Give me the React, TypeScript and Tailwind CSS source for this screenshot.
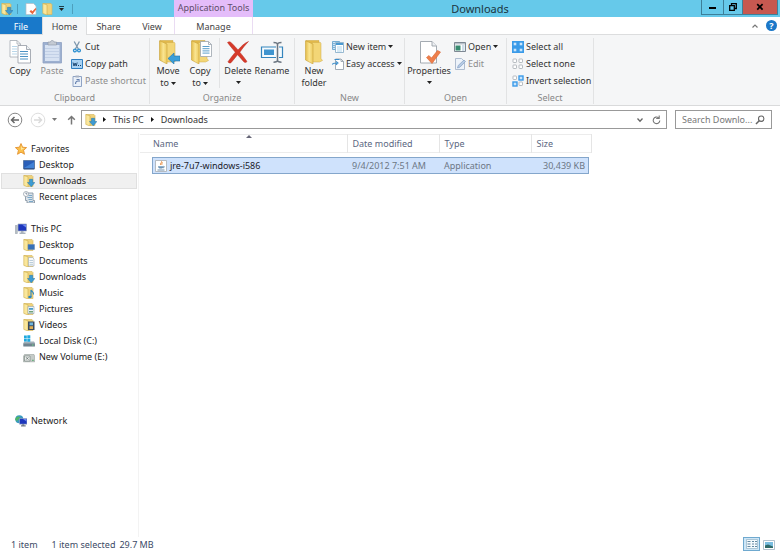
import type { ReactNode } from "react";

function FolderBig({ children }: { children?: ReactNode }) {
  return (
    <svg viewBox="0 0 24 24" className="w-6 h-6 shrink-0" aria-hidden="true">
      <defs>
        <linearGradient id="folderFace" x1="0" y1="0" x2="1" y2="0">
          <stop offset="0" stopColor="#e3bb48" />
          <stop offset="0.5" stopColor="#fae592" />
          <stop offset="1" stopColor="#ecca5e" />
        </linearGradient>
      </defs>
      <path d="M4 0.5h13v20H8z" fill="#e2b94a" stroke="#cda63f" strokeWidth="0.5" />
      <path d="M10 2.5h8.5l0.5 1v15l1.5 2-3 1.5H10z" fill="#f3d676" stroke="#cfab48" strokeWidth="0.5" />
      <path d="M3.5 0.8 11 4v20l-7.5-4z" fill="url(#folderFace)" stroke="#c9a23a" strokeWidth="0.6" />
      {children}
    </svg>
  );
}

function FolderSmall({ children }: { children?: ReactNode }) {
  return (
    <svg viewBox="0 0 12 12" className="w-3 h-3 shrink-0" aria-hidden="true">
      <path d="M1 0.5h8l1 1V11.5H5z" fill="#efd27a" stroke="#d3b45a" strokeWidth="0.6" />
      <path d="M0.8 0.5 5 1.8V12L0.8 10.4z" fill="#fae79c" stroke="#cfac4a" strokeWidth="0.6" />
      {children}
    </svg>
  );
}

const downArrow = (
  <path d="M6.5 4.3h3.2v3.2h2.2L8.2 11.8 4.5 7.5h2z" fill="#3d9bd3" stroke="#2377ad" strokeWidth="0.5" />
);

function Page({ x, y }: { x: number; y: number }) {
  return (
    <g transform={`translate(${x} ${y})`}>
      <path d="M0.5 0.5h8l3 3v12h-11z" fill="#fff" stroke="#9ca4ad" strokeWidth="0.8" />
      <path d="M8.5 0.5v3h3" fill="none" stroke="#9ca4ad" strokeWidth="0.8" />
      <path d="M2.5 5.5h7M2.5 7.7h7M2.5 9.9h7M2.5 12.1h7" stroke="#5b9fcb" strokeWidth="1" />
    </g>
  );
}

function CopyIcon() {
  return (
    <svg viewBox="0 0 24 24" className="w-6 h-6" aria-hidden="true">
      <path d="M2 0.5h7l3.5 3.5v13H2z" fill="#fff" stroke="#a5abb2" strokeWidth="0.8" />
      <path d="M9 0.5V4h3.5" fill="none" stroke="#a5abb2" strokeWidth="0.8" />
      <path d="M4 6.5h5M4 9h5M4 11.5h5M4 14h5" stroke="#b9d6e9" strokeWidth="1" />
      <path d="M10 5.5h8.5l4 4V23H10z" fill="#fff" stroke="#949ba4" strokeWidth="0.8" />
      <path d="M18.5 5.5v4h4" fill="#eef1f4" stroke="#949ba4" strokeWidth="0.8" />
      <path d="M12 11.5h8M12 14h8M12 16.5h8M12 19h8" stroke="#4c93c4" strokeWidth="1.2" />
    </svg>
  );
}

function PasteIcon() {
  return (
    <svg viewBox="0 0 24 24" className="w-6 h-6" aria-hidden="true">
      <path d="M3 2.5h18.5v20.5H3z" fill="#9db0d0" stroke="#8fa2c3" strokeWidth="0.8" />
      <path d="M5 5h14.5v16H5z" fill="#d7e2f2" />
      <path d="M5 8.5h14.5M5 11.5h14.5M5 14.5h14.5M5 17.5h14.5" stroke="#bccbe2" strokeWidth="0.8" />
      <path d="M8 2h2.5c0-2 3.5-2 3.5 0h2.5v3H8z" fill="#c4cad3" stroke="#8b95a4" strokeWidth="0.6" />
    </svg>
  );
}

function CutIcon() {
  return (
    <svg viewBox="0 0 12 12" className="w-3 h-3 shrink-0" aria-hidden="true">
      <path d="M3.2 0.5 7.4 8M8.4 0.5 4.4 8" stroke="#7d97ad" strokeWidth="1.3" />
      <circle cx="3.9" cy="9.5" r="1.4" fill="none" stroke="#2d8fd0" strokeWidth="1.3" />
      <circle cx="8" cy="9.5" r="1.4" fill="none" stroke="#2d8fd0" strokeWidth="1.3" />
    </svg>
  );
}

function CopyPathIcon() {
  return (
    <svg viewBox="0 0 12 12" className="w-3 h-3 shrink-0" aria-hidden="true">
      <path d="M0.5 1.5h11v9H0.5z" fill="#a9d2f3" stroke="#2f7fc1" />
      <path d="M2 4.5 3 8l1.1-3L5.2 8l1-3.5" fill="none" stroke="#143f6b" strokeWidth="0.9" />
      <path d="M7 7.5h1M9 7.5h1" stroke="#143f6b" />
    </svg>
  );
}

function PasteShortcutIcon() {
  return (
    <svg viewBox="0 0 12 12" className="w-3 h-3 shrink-0" aria-hidden="true">
      <path d="M2 1.5h8.5v10H2z" fill="#eaf0f8" stroke="#8fa3c4" />
      <path d="M4.5 0.5H8v2H4.5z" fill="#a8b3c4" />
      <path d="M4.5 9c0-2 1-3 2.5-3M5.5 4.5H8V7" fill="none" stroke="#637fae" strokeWidth="1.1" />
    </svg>
  );
}

function DeleteIcon() {
  return (
    <svg viewBox="0 0 24 24" className="w-6 h-6" aria-hidden="true">
      <path d="M1.5 2.5C3 1.5 4 1.5 5.5 3c2.5 2.3 4.5 4.5 6.5 7 3.5-4 6.5-7 10.5-8.5C19 5 16.5 8.5 13.8 12.2c2.7 3.3 5 6 7.2 9.3-1.2 1.3-2.2 1.3-3.5 0-2-2.5-4-4.8-6-6.8-2.5 3-4.2 5.5-6.5 8-1.2 0.7-2.5 0.3-3-1 2.5-3.5 4.8-6.5 7.3-9.5C6.7 8.8 4 6 1.5 2.5z" fill="#d63a2a" stroke="#b82a1e" strokeWidth="0.5" />
    </svg>
  );
}

function RenameIcon() {
  return (
    <svg viewBox="0 0 24 24" className="w-6 h-6" aria-hidden="true">
      <path d="M1.5 7h21v10.5h-21z" fill="#f5fafd" stroke="#3585bd" strokeWidth="1.2" />
      <path d="M4 9.5h10v5.5H4z" fill="#3f94cf" />
      <path d="M16 6h3v12.5h-3z" fill="#f5f6f7" />
      <path d="M13.5 2.5c2 0 4 0.3 4 2.2 0-1.9 2-2.2 4-2.2M17.5 4v17M13.5 22.3c2 0 4-0.3 4-2.2 0 1.9 2 2.2 4 2.2" fill="none" stroke="#6c7681" strokeWidth="1.5" />
    </svg>
  );
}

function PropertiesIcon() {
  return (
    <svg viewBox="0 0 24 24" className="w-6 h-6" aria-hidden="true">
      <path d="M3.5 1.5H15l4.5 4.5v17h-16z" fill="#fff" stroke="#9aa1a9" strokeWidth="0.9" />
      <path d="M15 1.5V6h4.5" fill="#edf0f3" stroke="#9aa1a9" strokeWidth="0.9" />
      <path d="M9.5 17.5l2.5-2 2.5 2.5 6-7.5 3 1.5-8.5 11.5z" fill="#ee7f4b" stroke="#d96534" strokeWidth="0.6" />
    </svg>
  );
}

function NewItemIcon() {
  return (
    <svg viewBox="0 0 12 12" className="w-3 h-3 shrink-0" aria-hidden="true">
      <path d="M0.5 0.5h7v8h-7z" fill="#cfe5f5" stroke="#5b9cc9" strokeWidth="0.8" />
      <path d="M3.5 1.5h8v10h-8z" fill="#fff" stroke="#7fa8c6" strokeWidth="0.8" />
      <path d="M4 2h7v2H4z" fill="#4a99d0" />
      <path d="M5 6h5M5 8h5M5 10h5" stroke="#9ccbe9" strokeWidth="0.8" />
      <path d="M1.5 2.5h1M1.5 4.5h1M1.5 6.5h1" stroke="#2d7fba" />
    </svg>
  );
}

function EasyAccessIcon() {
  return (
    <svg viewBox="0 0 12 12" className="w-3 h-3 shrink-0" aria-hidden="true">
      <path d="M3.5 1h5.5l2.5 2.5v8h-8z" fill="#fff" stroke="#8d99a5" strokeWidth="0.8" />
      <path d="M9 1v2.5h2.5" fill="none" stroke="#8d99a5" strokeWidth="0.8" />
      <path d="M0 6.5c1-1.5 2.5-1.5 5-1.5M4 3.3 6 5 4 6.8" fill="none" stroke="#3c8ecb" strokeWidth="1.1" />
      <path d="M2.5 1.5h5" stroke="#3c8ecb" />
    </svg>
  );
}

function OpenIcon() {
  return (
    <svg viewBox="0 0 12 12" className="w-3 h-3 shrink-0" aria-hidden="true">
      <path d="M0.5 1.5h11v9H0.5z" fill="#fff" stroke="#6f7b87" strokeWidth="0.9" />
      <path d="M1 2h10v1.5H1z" fill="#b8c1ca" />
      <path d="M1.5 4.5h5v5h-5z" fill="#388b70" />
      <path d="M8 5h2.5M8 7h2.5M8 9h2.5" stroke="#94b6cd" strokeWidth="0.9" />
    </svg>
  );
}

function EditIcon() {
  return (
    <svg viewBox="0 0 12 12" className="w-3 h-3 shrink-0" aria-hidden="true">
      <path d="M1.5 0.5h6l3 3v8h-9z" fill="#edf3fa" stroke="#a7b7cb" strokeWidth="0.9" />
      <path d="M3.5 10 4.2 7.5 10 2l1.5 1.5-5.6 5.7z" fill="#b6cbe4" stroke="#86a2c6" strokeWidth="0.7" />
    </svg>
  );
}

const cells = [
  [1, 1],
  [7, 1],
  [1, 7],
  [7, 7],
];

function SelectIcon({ kind }: { kind: "all" | "none" | "invert" }) {
  return (
    <svg viewBox="0 0 12 12" className="w-3 h-3 shrink-0" aria-hidden="true">
      {kind === "all" && <rect width="12" height="12" fill="#3b9be8" />}
      {cells.map(([x, y], i) => {
        const on = kind === "all" || (kind === "invert" && (i === 1 || i === 2));
        return on ? (
          <rect key={i} x={x} y={y} width="4" height="4" fill="#c9e5fb" stroke="#3b9be8" strokeWidth="1.4" />
        ) : (
          <rect key={i} x={x} y={y} width="3.5" height="3.5" rx="0.6" fill="#fff" stroke="#a6acb2" strokeWidth="0.8" />
        );
      })}
    </svg>
  );
}

function StarIcon() {
  return (
    <svg viewBox="0 0 12 12" className="w-3 h-3 shrink-0" aria-hidden="true">
      <path d="M6 0.5 7.6 4.2l4 0.4-3 2.7 0.9 4L6 9.2l-3.5 2.1 0.9-4-3-2.7 4-0.4z" fill="#fbc04a" stroke="#e18a26" strokeWidth="0.8" />
      <path d="M6 2.5 7 5l2.5 0.2L6 7z" fill="#fee6a0" />
    </svg>
  );
}

function DesktopIcon() {
  return (
    <svg viewBox="0 0 12 12" className="w-3 h-3 shrink-0" aria-hidden="true">
      <path d="M0.5 1.5h11v8.5H0.5z" fill="#2b5fb8" stroke="#5f7ca6" />
      <path d="M1 9 11 3v6.5H1z" fill="#4182d6" />
      <path d="M1 9.8h10" stroke="#253f6d" strokeWidth="0.8" />
    </svg>
  );
}

function RecentIcon() {
  return (
    <svg viewBox="0 0 12 12" className="w-3 h-3 shrink-0" aria-hidden="true">
      <path d="M2.5 2h7.5v7.5h1.5V12H4V9.5H2.5z" fill="#dbe3ea" stroke="#7f8e9c" strokeWidth="0.8" />
      <path d="M5.5 4.5h3.5M4.5 6.5h4.5M5.5 8.5h3.5M6 10.5h4" stroke="#6fa1c4" strokeWidth="0.9" />
      <circle cx="3" cy="3" r="2.5" fill="#fff" stroke="#8c98a4" strokeWidth="0.7" />
      <path d="M3 1.5V3h1.3" fill="none" stroke="#4a6075" strokeWidth="0.7" />
    </svg>
  );
}

function PcIcon() {
  return (
    <svg viewBox="0 0 12 12" className="w-3 h-3 shrink-0" aria-hidden="true">
      <path d="M0.3 2.5h2v8h-2z" fill="#b9c1c8" stroke="#8b959e" strokeWidth="0.5" />
      <path d="M3 1h8.5v7H3z" fill="#1d37bd" stroke="#9da9b8" strokeWidth="0.7" />
      <path d="M7 1.5h4v3z" fill="#6d8af0" />
      <path d="M6 8h2.5v1.5h2V11H4.5V9.5H6z" fill="#aab3bd" />
    </svg>
  );
}

function LocalDiskIcon() {
  return (
    <svg viewBox="0 0 12 12" className="w-3 h-3 shrink-0" aria-hidden="true">
      <path d="M1.5 6.5H11l1 1.5v3.5H0.3V8z" fill="#a3b1ba" />
      <path d="M1 0.5h2.8v2.8H1zM4.3 0.3h3v3h-3zM1 3.8h2.8v2.8H1zM4.3 3.8h3v3h-3z" fill="#1fa9df" />
      <path d="M0.5 8.5h11.3v2.8H0.5z" fill="#71838e" />
      <path d="M9 10h1.5" stroke="#6fe08a" strokeWidth="0.9" />
    </svg>
  );
}

function VolumeIcon() {
  return (
    <svg viewBox="0 0 12 12" className="w-3 h-3 shrink-0" aria-hidden="true">
      <path d="M1.5 3.5H11l0.8 2v5.3H0.3V5.5z" fill="#c5cbc8" stroke="#8c9793" strokeWidth="0.5" />
      <path d="M1.5 5h5.5v5H1.5z" fill="#eff1ef" stroke="#6d7a76" strokeWidth="0.6" />
      <path d="M3 6.2l2.5 2.5M5.5 6.2 3 8.7" stroke="#4e5d59" strokeWidth="0.7" />
      <path d="M9 9.3h1.8" stroke="#4aa866" strokeWidth="0.9" />
    </svg>
  );
}

function NetworkIcon() {
  return (
    <svg viewBox="0 0 12 12" className="w-3 h-3 shrink-0" aria-hidden="true">
      <circle cx="4.3" cy="4.3" r="4" fill="#3a9ac0" />
      <path d="M1.5 2.2C3 1 5 1.5 5 3S2.5 4 2.5 5.5 1.5 6 0.5 5 0.8 3 1.5 2.2z" fill="#4fb567" />
      <path d="M4.5 3.5H12v5.7H4.5z" fill="#1d37bd" stroke="#a8b2c4" strokeWidth="0.6" />
      <path d="M8 4h3.5v2.5z" fill="#6d8af0" />
      <path d="M7.2 9.3h2v1h1.5V11.5H6v-1.2h1.2z" fill="#707b88" />
    </svg>
  );
}

function JavaIcon() {
  return (
    <svg viewBox="0 0 12 12" className="w-3 h-3 shrink-0" aria-hidden="true">
      <path d="M0.5 0.5h11v11H0.5z" fill="#fff" stroke="#a8adb3" strokeWidth="0.8" />
      <path d="M6.5 1.3c1 1.2-2 1.8-0.7 3.7M7.8 2.5C6.5 3.2 6.7 4 7 4.8" fill="none" stroke="#e4812f" strokeWidth="0.9" />
      <path d="M3 6.2h5.5c0 1.7-1 2.3-2.7 2.3S3 7.8 3 6.2z" fill="#6c93b5" />
      <path d="M8.5 6.3c1.3 0 1.2 1.3-0.5 1.5M2.5 10h7" fill="none" stroke="#4a7599" strokeWidth="0.8" />
    </svg>
  );
}

function CheckPage() {
  return (
    <svg viewBox="0 0 12 12" className="w-3 h-3" aria-hidden="true">
      <path d="M1 0.5h7.5l2.5 2.5v8.5H1z" fill="#fff" stroke="#b6bcc4" strokeWidth="0.7" />
      <path d="M4.5 8.5 6 7l1.5 1.3L10.5 5l1 1-4 5.3z" fill="#e9663d" />
    </svg>
  );
}

function Caret() {
  return (
    <svg viewBox="0 0 5 3" className="inline-block w-[5px] h-[3px] shrink-0" aria-hidden="true">
      <path d="M0 0h5L2.5 3z" fill="#222" />
    </svg>
  );
}

function BigButton({ icon, children, disabled, className }: { icon: ReactNode; children: ReactNode; disabled?: boolean; className: string }) {
  return (
    <button disabled={disabled} className={`flex flex-col items-center shrink-0 pt-[2px] disabled:text-[#8d8d8d] ${className}`}>
      {icon}
      <span className="mt-px flex flex-col items-center leading-3">{children}</span>
    </button>
  );
}

function SmallButton({ icon, label, menu, disabled }: { icon: ReactNode; label: string; menu?: boolean; disabled?: boolean }) {
  return (
    <button disabled={disabled} className="flex items-center gap-[2px] h-[17px] whitespace-nowrap disabled:text-[#8d8d8d]">
      {icon}
      {label}
      {menu && <Caret />}
    </button>
  );
}

function Group({ title, className, children }: { title: string; className: string; children: ReactNode }) {
  return (
    <section aria-label={title} className={`shrink-0 flex flex-col border-r border-[#e2e3e4] ${className}`}>
      <div className="flex h-[54px]">{children}</div>
      <div className="text-center text-[#888] leading-[13px]">{title}</div>
    </section>
  );
}

function TreeLink({ icon, label, root, active }: { icon: ReactNode; label: string; root?: boolean; active?: boolean }) {
  return (
    <a
      href="#"
      className={`flex items-center gap-1 h-4 ml-px mr-px border ${root ? "pl-[13px]" : "pl-[21px]"} ${active ? "bg-[#f0f0f0] border-[#e0e0e0]" : "border-transparent"}`}
    >
      {icon}
      {label}
    </a>
  );
}

function TitleBar() {
  return (
    <header className="flex h-[17px] bg-[#66c9ea]">
      <div className="w-[174px] shrink-0 flex items-center pl-px">
        <FolderSmall>{downArrow}</FolderSmall>
        <span className="ml-1 w-px h-[10px] bg-[#4d9fbd]" />
        <button aria-label="Properties" className="ml-[7px]"><CheckPage /></button>
        <button aria-label="New folder" className="ml-[5px]"><FolderSmall /></button>
        <button aria-label="Customize toolbar" className="ml-[5px] flex flex-col items-center gap-px">
          <span className="w-[5px] h-px bg-[#1c3d49]" />
          <Caret />
        </button>
        <span className="ml-2 w-px h-[10px] bg-[#4d9fbd]" />
      </div>
      <div className="w-[79px] shrink-0 bg-[#e4bdfa] text-center text-[#5f4d6b] leading-[15px] whitespace-nowrap">Application Tools</div>
      <h1 className="flex-1 pl-[6px] text-center text-[11px] leading-[17px] text-[#1c3540]">Downloads</h1>
      <div className="mr-[2px] flex h-[15px] shrink-0 border border-t-0 border-[#3d7f99]">
        <button aria-label="Minimize" className="w-[21px] flex items-center justify-center">
          <span className="mt-[2px] w-[7px] h-[2px] bg-black" />
        </button>
        <button aria-label="Restore" className="w-5 flex items-center justify-center border-x border-[#3d7f99]">
          <svg viewBox="0 0 8 8" className="w-2 h-2"><path d="M2.5 2V0.7h4.8v4.8H6M0.7 2.7h4.6v4.6H0.7z" fill="none" stroke="#000" strokeWidth="1.3" /></svg>
        </button>
        <button aria-label="Close" className="w-[34px] flex items-center justify-center bg-[#c75850]">
          <svg viewBox="0 0 8 8" className="w-2 h-2"><path d="M1.2 1.2l5.4 5.4M6.6 1.2 1.2 6.6" stroke="#000" strokeWidth="1.7" /></svg>
        </button>
      </div>
    </header>
  );
}

function Tabs() {
  return (
    <nav className="flex h-[18px] border-b border-[#dcddde] leading-[20px] text-[#444]">
      <button className="w-[42px] bg-[#1979ca] text-white">File</button>
      <button className="w-[45px] mb-[-1px] border-x border-[#dcddde] bg-[#f5f6f7]">Home</button>
      <button className="w-[43px]">Share</button>
      <button className="w-[44px]">View</button>
      <button className="w-[79px] border-x border-[#eadcf3]">Manage</button>
      <div className="flex-1" />
      <div className="flex items-center gap-[7px] pr-[3px]">
        <button aria-label="Collapse ribbon">
          <svg viewBox="0 0 8 6" className="w-2 h-[6px]"><path d="M1.5 4.5 4 2l2.5 2.5" fill="none" stroke="#777" strokeWidth="1.2" /></svg>
        </button>
        <button aria-label="Help" className="w-[11px] h-[11px] rounded-full bg-[#1c78c8] text-white font-bold leading-[11px] text-center">?</button>
      </div>
    </nav>
  );
}

function Ribbon() {
  return (
    <div className="flex overflow-hidden pt-[3px] pb-px h-[71px] bg-[#f5f6f7] border-b border-[#d9dadb] text-[#333]">
      <Group title="Clipboard" className="w-[150px]">
        <BigButton className="w-[32px] ml-1" icon={<CopyIcon />}>Copy</BigButton>
        <BigButton className="w-[32px]" icon={<PasteIcon />} disabled>Paste</BigButton>
        <div className="ml-[3px] flex flex-col">
          <SmallButton icon={<CutIcon />} label="Cut" />
          <SmallButton icon={<CopyPathIcon />} label="Copy path" />
          <SmallButton icon={<PasteShortcutIcon />} label="Paste shortcut" disabled />
        </div>
      </Group>
      <Group title="Organize" className="w-[145px]">
        <BigButton
          className="w-[32px] ml-[2px]"
          icon={<FolderBig><path d="M12 18.5 18 13v3h6v5h-6v3z" fill="#3b9ed8" stroke="#1e74ab" strokeWidth="0.6" /></FolderBig>}
        >
          <span>Move</span>
          <span className="flex items-center gap-[2px]">to <Caret /></span>
        </BigButton>
        <BigButton className="w-[32px]" icon={<FolderBig><Page x={12} y={1} /></FolderBig>}>
          <span>Copy</span>
          <span className="flex items-center gap-[2px]">to <Caret /></span>
        </BigButton>
        <span className="ml-[3px] w-px h-[50px] bg-[#e2e3e4]" />
        <BigButton className="w-[34px] ml-px" icon={<DeleteIcon />}>
          <span>Delete</span>
          <span className="flex items-center h-[10px]"><Caret /></span>
        </BigButton>
        <BigButton className="w-[34px]" icon={<RenameIcon />}>Rename</BigButton>
      </Group>
      <Group title="New" className="w-[110px]">
        <BigButton className="w-[32px] ml-[3px]" icon={<FolderBig />}>
          <span>New</span>
          <span>folder</span>
        </BigButton>
        <div className="ml-[2px] flex flex-col">
          <SmallButton icon={<NewItemIcon />} label="New item" menu />
          <SmallButton icon={<EasyAccessIcon />} label="Easy access" menu />
        </div>
      </Group>
      <Group title="Open" className="w-[102px]">
        <BigButton className="w-[44px] ml-[2px]" icon={<PropertiesIcon />}>
          <span>Properties</span>
          <span className="flex items-center h-[10px]"><Caret /></span>
        </BigButton>
        <div className="ml-[3px] flex flex-col">
          <SmallButton icon={<OpenIcon />} label="Open" menu />
          <SmallButton icon={<EditIcon />} label="Edit" disabled />
        </div>
      </Group>
      <Group title="Select" className="w-[87px]">
        <div className="ml-[5px] flex flex-col">
          <SmallButton icon={<SelectIcon kind="all" />} label="Select all" />
          <SmallButton icon={<SelectIcon kind="none" />} label="Select none" />
          <SmallButton icon={<SelectIcon kind="invert" />} label="Invert selection" />
        </div>
      </Group>
    </div>
  );
}

function Crumb() {
  return (
    <svg viewBox="0 0 3 5" className="w-[3px] h-[5px]" aria-hidden="true">
      <path d="M0 0v5l3-2.5z" fill="#111" />
    </svg>
  );
}

function AddressBar() {
  return (
    <div className="flex items-center h-[27px] pl-[7px] pr-2">
      <button aria-label="Back">
        <svg viewBox="0 0 16 16" className="w-4 h-4">
          <circle cx="8" cy="8" r="6.8" fill="#fff" stroke="#888" />
          <path d="M12 8H4.5M7.5 5l-3 3 3 3" fill="none" stroke="#666" strokeWidth="1.5" />
        </svg>
      </button>
      <button aria-label="Forward" disabled className="ml-[7px]">
        <svg viewBox="0 0 16 16" className="w-4 h-4">
          <circle cx="8" cy="8" r="6.8" fill="#fff" stroke="#dedede" />
          <path d="M4 8h7.5M8.5 5l3 3-3 3" fill="none" stroke="#dadada" strokeWidth="1.5" />
        </svg>
      </button>
      <button aria-label="Recent locations" className="ml-[6px]">
        <svg viewBox="0 0 5 3" className="w-[5px] h-[3px]"><path d="M0 0h5L2.5 3z" fill="#777" /></svg>
      </button>
      <button aria-label="Up" className="ml-[10px]">
        <svg viewBox="0 0 9 10" className="w-[9px] h-[10px]"><path d="M4.5 9.5V1.5M1.2 4.8l3.3-3.3 3.3 3.3" fill="none" stroke="#777" strokeWidth="1.5" /></svg>
      </button>
      <div className="ml-[5px] flex-1 flex items-center h-[19px] pl-[3px] pr-[5px] border border-[#999] text-[#333]">
        <FolderSmall>{downArrow}</FolderSmall>
        <span className="ml-[6px] mr-[7px]"><Crumb /></span>
        <a href="#">This PC</a>
        <span className="mx-[7px]"><Crumb /></span>
        <a href="#">Downloads</a>
        <div className="flex-1" />
        <button aria-label="Previous locations">
          <svg viewBox="0 0 8 6" className="w-2 h-[6px]"><path d="M1.5 1.5 4 4.2l2.5-2.7" fill="none" stroke="#666" strokeWidth="1.3" /></svg>
        </button>
        <button aria-label="Refresh" className="ml-2">
          <svg viewBox="0 0 9 10" className="w-[9px] h-[10px]"><path d="M7.8 5.5a3.3 3.3 0 1 1-1.3-2.8M4.2 3.5h3V0.5" fill="none" stroke="#777" strokeWidth="1.1" /></svg>
        </button>
      </div>
      <label className="ml-2 w-[97px] h-[19px] flex items-center px-[6px] border border-[#999]">
        <input aria-label="Search Downloads" placeholder="Search Downlo..." className="flex-1 min-w-0 outline-none placeholder:text-[#777]" />
        <svg viewBox="0 0 10 10" className="w-[10px] h-[10px] shrink-0" aria-hidden="true">
          <circle cx="6.2" cy="3.7" r="2.7" fill="none" stroke="#666" strokeWidth="1.1" />
          <path d="M4.2 5.7 1 9" stroke="#666" strokeWidth="1.5" />
        </svg>
      </label>
    </div>
  );
}

function Sidebar() {
  return (
    <aside className="w-[139px] shrink-0 pt-2 border-r border-[#f3f3f3] text-[#222]">
      <TreeLink root icon={<StarIcon />} label="Favorites" />
      <TreeLink icon={<DesktopIcon />} label="Desktop" />
      <TreeLink active icon={<FolderSmall>{downArrow}</FolderSmall>} label="Downloads" />
      <TreeLink icon={<RecentIcon />} label="Recent places" />
      <div className="h-4" />
      <TreeLink root icon={<PcIcon />} label="This PC" />
      <TreeLink icon={<FolderSmall><path d="M5 5.5h6.5v5H5z" fill="#3771b8" stroke="#5f84b5" strokeWidth="0.5" /></FolderSmall>} label="Desktop" />
      <TreeLink
        icon={
          <FolderSmall>
            <path d="M5.5 2.5h4l1.5 1.5v7H5.5z" fill="#f8fafb" stroke="#9dacb8" strokeWidth="0.6" />
            <path d="M6.5 5.5h3.5M6.5 7.5h3.5M6.5 9.3h3.5" stroke="#9fb9cc" strokeWidth="0.7" />
          </FolderSmall>
        }
        label="Documents"
      />
      <TreeLink icon={<FolderSmall>{downArrow}</FolderSmall>} label="Downloads" />
      <TreeLink
        icon={
          <FolderSmall>
            <path d="M8 10V3c0.5 1.5 3 2 2.5 4.5" fill="none" stroke="#2a86c4" strokeWidth="1.1" />
            <ellipse cx="6.9" cy="10" rx="1.7" ry="1.3" fill="#2a86c4" />
          </FolderSmall>
        }
        label="Music"
      />
      <TreeLink
        icon={
          <FolderSmall>
            <path d="M5 3.5h6v7H5z" fill="#eef5f8" stroke="#8ea3b2" strokeWidth="0.6" />
            <path d="M6 5h4v1.8H6z" fill="#4c9cc9" />
            <path d="M6 8h4v1.5H6z" fill="#71a37a" />
          </FolderSmall>
        }
        label="Pictures"
      />
      <TreeLink
        icon={
          <FolderSmall>
            <path d="M5 2.5h6.5v8.5H5z" fill="#3b4a5c" />
            <path d="M6.5 3.5h3.5v2.8H6.5z" fill="#70b5dc" />
            <path d="M6.5 7.2h3.5V10H6.5z" fill="#e0ad51" />
          </FolderSmall>
        }
        label="Videos"
      />
      <TreeLink icon={<LocalDiskIcon />} label="Local Disk (C:)" />
      <TreeLink icon={<VolumeIcon />} label="New Volume (E:)" />
      <div className="h-12" />
      <TreeLink root icon={<NetworkIcon />} label="Network" />
    </aside>
  );
}

function FileList() {
  return (
    <main className="flex-1 min-w-0 pl-px pt-px">
      <table className="table-fixed w-[451px] border-collapse text-left">
        <colgroup>
          <col className="w-[207px]" />
          <col className="w-[92px]" />
          <col className="w-[92px]" />
          <col className="w-[60px]" />
        </colgroup>
        <thead className="text-[#5b6781]">
          <tr className="h-[18px] border-y border-[#ececec]">
            <th className="relative pl-[13px] font-normal border-r border-[#e5e5e5]">
              Name
              <svg viewBox="0 0 6 3" className="absolute top-0 left-[106px] w-[6px] h-[3px]" aria-hidden="true"><path d="M0 3h6L3 0z" fill="#667" /></svg>
            </th>
            <th className="pl-[5px] font-normal border-r border-[#e5e5e5]">Date modified</th>
            <th className="pl-[5px] font-normal border-r border-[#e5e5e5]">Type</th>
            <th className="pl-[5px] font-normal border-r border-[#e5e5e5]">Size</th>
          </tr>
        </thead>
        <tbody className="text-[#6d7785]">
          <tr>
            <td className="p-0 pt-1">
              <div className="ml-3 flex items-center gap-[3px] h-[17px] pl-[2px] border border-r-0 border-[#84a6cb] bg-[#cfe2fc] text-[#1a1a2a]">
                <JavaIcon />
                jre-7u7-windows-i586
              </div>
            </td>
            <td className="p-0 pt-1"><div className="h-[17px] pl-[5px] leading-[15px] border-y border-[#84a6cb] bg-[#cfe2fc]">9/4/2012 7:51 AM</div></td>
            <td className="p-0 pt-1"><div className="h-[17px] pl-[5px] leading-[15px] border-y border-[#84a6cb] bg-[#cfe2fc]">Application</div></td>
            <td className="p-0 pt-1"><div className="mr-[2px] h-[17px] pr-[3px] leading-[15px] text-right border border-l-0 border-[#84a6cb] bg-[#cfe2fc] whitespace-nowrap">30,439 KB</div></td>
          </tr>
        </tbody>
      </table>
    </main>
  );
}

function StatusBar() {
  return (
    <footer className="flex items-end h-[14px] pl-[11px] pr-[5px] text-[#3c4a66]">
      <span>1 item</span>
      <span className="ml-[14px]">1 item selected</span>
      <span className="ml-1">29.7 MB</span>
      <div className="flex-1" />
      <button aria-label="Details view" className="flex items-center justify-center w-[17px] h-[14px] border border-[#6fa9cf] bg-[#cde6f7]">
        <svg viewBox="0 0 12 10" className="w-3 h-[10px]">
          <path d="M0.5 0.5h11v9H0.5z" fill="#f4fafd" stroke="#88a9be" strokeWidth="0.6" />
          <path d="M1.5 2.5h3M1.5 5h3M1.5 7.5h3M6 2.5h2M6 5h2M6 7.5h2M9 2.5h2M9 5h2M9 7.5h2" stroke="#527c98" strokeWidth="0.9" />
        </svg>
      </button>
      <button aria-label="Large icons view" className="ml-[3px] pb-px">
        <svg viewBox="0 0 12 10" className="w-3 h-[10px]">
          <path d="M0.5 0.5h11v9H0.5z" fill="#fff" stroke="#9fb3c2" strokeWidth="0.8" />
          <path d="M2 2h8v6H2z" fill="#79bde0" />
          <path d="M2 5.5l3-1 5 2V8H2z" fill="#2f6a69" />
        </svg>
      </button>
    </footer>
  );
}

export default function App() {
  return (
    <div className="flex flex-col min-h-screen bg-white text-[9px] leading-3 font-['Noto_Sans','Open_Sans',sans-serif]">
      <TitleBar />
      <Tabs />
      <Ribbon />
      <AddressBar />
      <div className="flex flex-1">
        <Sidebar />
        <FileList />
      </div>
      <StatusBar />
    </div>
  );
}
